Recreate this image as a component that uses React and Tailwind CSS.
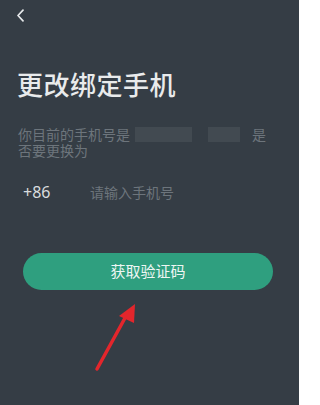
import React from 'react';

export default function App() {
  return (
    <div
      className="relative h-[405px] w-[299px] overflow-hidden bg-[#353d45]"
      style={{ fontFamily: '"Noto Sans CJK SC", "Noto Sans", sans-serif' }}
    >
      {/* Top bar */}
      <div className="flex h-[31px] items-center pl-[16px]">
        <svg width="9" height="13" viewBox="0 0 9 13" fill="none">
          <path d="M7 1.2 L2 6.5 L7 11.8" stroke="#e6e9eb" strokeWidth="1.7" strokeLinecap="round" strokeLinejoin="round" />
        </svg>
      </div>

      {/* Title */}
      <h1 className="mt-[36px] pl-[17px] text-[26px] font-medium leading-[34px] tracking-[0.5px] text-[#e9ebec]">
        更改绑定手机
      </h1>

      {/* Current phone */}
      <p className="mt-[25px] pl-[18px] pr-[30px] text-[14px] leading-[16px] text-[#6d757c]">
        <span className="flex items-center">
          你目前的手机号是
          <span className="ml-[5px] inline-block h-[15px] w-[57px] bg-[#424a51]" />
          <span className="ml-[16px] inline-block h-[15px] w-[32px] bg-[#424a51]" />
          <span className="ml-[12px]">是</span>
        </span>
        否要更换为
      </p>

      {/* Phone input */}
      <div className="mt-[24px] flex items-center pl-[23px]">
        <span className="w-[67px] text-[16px] leading-[20px] text-[#d9dcde]" style={{ fontFamily: '"Noto Sans", sans-serif' }}>
          +86
        </span>
        <span className="text-[14px] leading-[20px] text-[#6d757c]">请输入手机号</span>
      </div>

      {/* Button */}
      <div className="mt-[51px] px-[23px]">
        <button className="flex h-[37px] w-[250px] items-center justify-center rounded-full bg-[#2f9f7f] text-[15px] text-[#eef6f3]">
          获取验证码
        </button>
      </div>

      {/* Red annotation arrow */}
      <svg className="absolute left-0 top-0" width="299" height="405" viewBox="0 0 299 405">
        <line x1="97" y1="369" x2="125" y2="318" stroke="#e3262c" strokeWidth="3.5" strokeLinecap="round" />
        <polygon points="135,304 119,316 134,323" fill="#e3262c" />
      </svg>
    </div>
  );
}
